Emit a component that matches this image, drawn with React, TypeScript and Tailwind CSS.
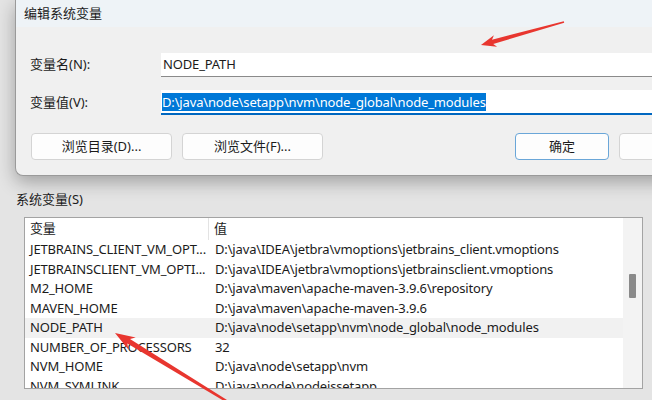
import React from "react";

const FONT = "font-['Noto_Sans','Noto_Sans_CJK_SC',sans-serif]";

type Pt = [number, number];

// tapered arrow as a single polygon, tip first
function arrowPoints(tip: Pt, tail: Pt, headLen: number, headW: number, w0: number, w1: number) {
  const dx = tail[0] - tip[0];
  const dy = tail[1] - tip[1];
  const len = Math.hypot(dx, dy);
  const ux = dx / len;
  const uy = dy / len;
  const nx = -uy;
  const ny = ux;
  const bx = tip[0] + ux * headLen;
  const by = tip[1] + uy * headLen;
  const neck = tip[0] + ux * headLen * 0.8;
  const necky = tip[1] + uy * headLen * 0.8;
  const pts: Pt[] = [
    tip,
    [bx + nx * headW, by + ny * headW],
    [neck + nx * w0, necky + ny * w0],
    [tail[0] + nx * w1, tail[1] + ny * w1],
    [tail[0] - nx * w1, tail[1] - ny * w1],
    [neck - nx * w0, necky - ny * w0],
    [bx - nx * headW, by - ny * headW],
  ];
  return pts.map((p) => `${p[0].toFixed(1)},${p[1].toFixed(1)}`).join(" ");
}

const rows = [
  ["JETBRAINS_CLIENT_VM_OPT...", "D:\\java\\IDEA\\jetbra\\vmoptions\\jetbrains_client.vmoptions"],
  ["JETBRAINSCLIENT_VM_OPTI...", "D:\\java\\IDEA\\jetbra\\vmoptions\\jetbrainsclient.vmoptions"],
  ["M2_HOME", "D:\\java\\maven\\apache-maven-3.9.6\\repository"],
  ["MAVEN_HOME", "D:\\java\\maven\\apache-maven-3.9.6"],
  ["NODE_PATH", "D:\\java\\node\\setapp\\nvm\\node_global\\node_modules"],
  ["NUMBER_OF_PROCESSORS", "32"],
  ["NVM_HOME", "D:\\java\\node\\setapp\\nvm"],
  ["NVM_SYMLINK", "D:\\java\\node\\nodeissetapp"],
];

function Button({ label, wide, primary }: { label?: string; wide?: boolean; primary?: boolean }) {
  return (
    <div
      className={
        "shrink-0 h-[27px] flex items-center justify-center rounded-[4px] bg-[#fdfdfd] text-[13px] text-[#1b1b1b] border " +
        (wide ? "w-[141px] " : "w-[94px] ") +
        (primary ? "border-[#6aa6d8]" : "border-[#d4d4d4]")
      }
    >
      {label}
    </div>
  );
}

export default function App() {
  return (
    <div className={`relative w-[652px] h-[400px] overflow-hidden bg-[#e4e4e4] ${FONT} text-[#1b1b1b]`}>
      {/* edit dialog */}
      <div className="relative z-10 ml-[15px] w-[660px] h-[176px] bg-[#f0f0f0] rounded-bl-[8px] border-l border-b border-[#9a9a9a] shadow-[0_6px_18px_rgba(0,0,0,0.3)] overflow-hidden">
        <div className="h-[27px] bg-[#eef3f7] pl-[8px] flex items-center text-[13px] leading-none">
          编辑系统变量
        </div>
        <div className="pl-[14px] pt-[26px]">
          <div className="flex items-center h-[24px]">
            <div className="w-[131px] text-[13px]">变量名(N):</div>
            <div className="flex-1 h-[24px] bg-white border-b border-[#8a8a8a] pl-[2px] flex items-center text-[13px] tracking-[-0.15px]">
              NODE_PATH
            </div>
          </div>
          <div className="flex items-center h-[25px] mt-[13px]">
            <div className="w-[131px] text-[13px]">变量值(V):</div>
            <div className="flex-1 h-[25px] bg-white border-b-2 border-[#0067c0] pl-[1px] flex items-center text-[13px] tracking-[-0.15px]">
              <span className="bg-[#0078d7] text-white leading-[18px]">
                D:\java\node\setapp\nvm\node_global\node_modules
              </span>
            </div>
          </div>
          <div className="flex items-center gap-[10px] mt-[18px] pl-[1px]">
            <Button label="浏览目录(D)..." wide />
            <Button label="浏览文件(F)..." wide />
            <div className="w-[172px] shrink-0" />
            <Button label="确定" primary />
            <Button />
          </div>
        </div>
      </div>

      {/* parent window: system variables */}
      <div className="pl-[16px] pt-[14px]">
        <div className="text-[13px] leading-[18px]">系统变量(S)</div>
        <div className="ml-[8px] mt-[9px] w-[619px] h-[172px] bg-white border border-[#a3a3a3] flex overflow-hidden">
          <div className="flex-1 flex flex-col text-[13px] tracking-[-0.15px]">
            <div className="h-[22px] flex items-center shrink-0">
              <div className="w-[184px] pl-[5px] border-r border-[#e3e3e3] h-full flex items-center">变量</div>
              <div className="pl-[5px]">值</div>
            </div>
            {rows.map(([name, value]) => (
              <div
                key={name}
                className={
                  "h-[19.5px] flex items-center shrink-0 whitespace-nowrap " +
                  (name === "NODE_PATH" ? "bg-[#f1f1f1]" : "")
                }
              >
                <div className="w-[185px] pl-[5px]">{name}</div>
                <div className="pl-[5px]">{value}</div>
              </div>
            ))}
          </div>
          <div className="w-[19px] bg-[#f3f3f3] flex justify-center pt-[56px]">
            <div className="w-[7px] h-[24px] bg-[#8a8a8a] rounded-[1px]" />
          </div>
        </div>
      </div>

      {/* red arrows */}
      <svg className="absolute inset-0 z-20 pointer-events-none" width="652" height="400">
        <polygon points={arrowPoints([481, 45], [564, 22], 15, 6, 2.2, 0.8)} fill="#e8362f" />
        <polygon points={arrowPoints([115, 333], [228, 402], 20, 7, 2.6, 1.2)} fill="#e8362f" />
      </svg>
    </div>
  );
}
